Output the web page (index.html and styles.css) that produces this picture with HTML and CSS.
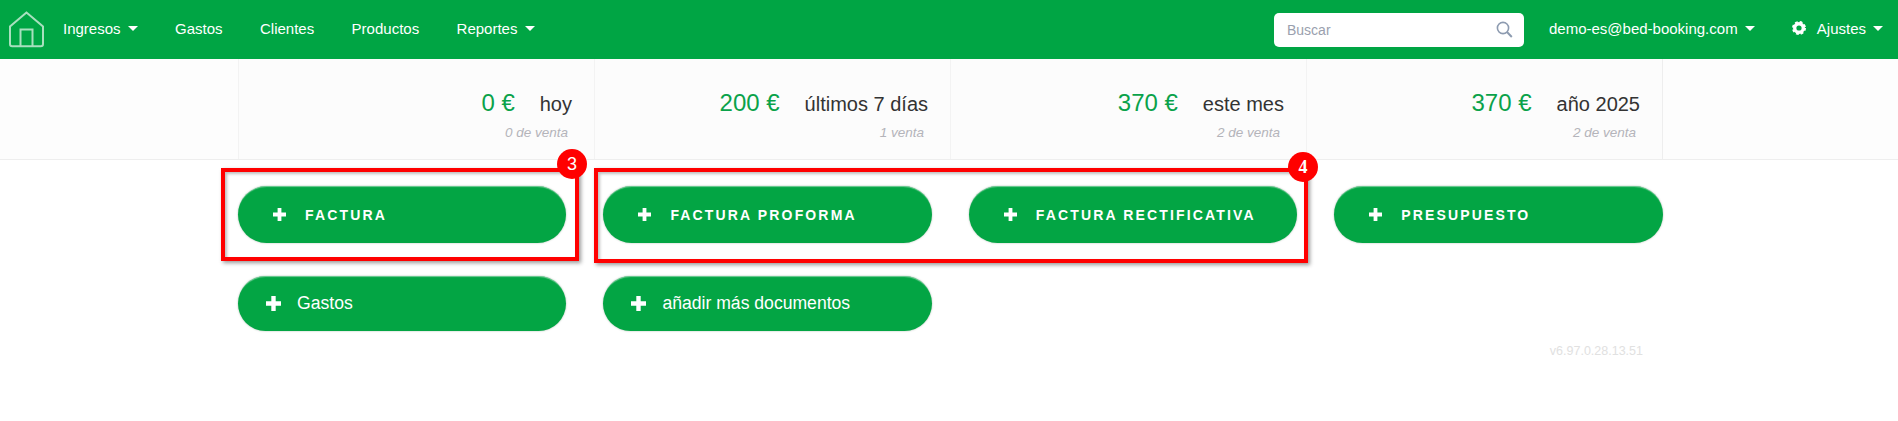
FILE: index.html
```html
<!DOCTYPE html>
<html lang="es">
<head>
    <meta charset="utf-8"/>
    <title>Panel</title>
    <link rel="stylesheet" href="styles.css">
</head>
<body>
<div class="navbar">
    <a class="nav_home">
        <svg width="37" height="37" viewBox="0 0 37 37" fill="none" stroke="#a8e0be" stroke-width="2">
            <path d="M18.5 1.5 L2 15.5 V33 Q2 35.2 4.2 35.2 H32.8 Q35 35.2 35 33 V15.5 Z"/>
            <path d="M12.5 35 V18.5 H24.5 V35"/>
        </svg>
    </a>
    <div class="nav_links">
        <a class="nav_link">Ingresos <span class="caret"></span></a>
        <a class="nav_link">Gastos</a>
        <a class="nav_link">Clientes</a>
        <a class="nav_link">Productos</a>
        <a class="nav_link">Reportes <span class="caret"></span></a>
    </div>
    <div class="nav_search">
        <span class="search_text">Buscar</span>
        <svg width="17" height="17" viewBox="0 0 17 17" fill="none" stroke="#8d9bb0" stroke-width="1.6">
            <circle cx="7" cy="7" r="5.6"/>
            <path d="M11 11 L15.8 16" stroke-width="2"/>
        </svg>
    </div>
    <a class="nav_link nav_user">demo-es@bed-booking.com <span class="caret"></span></a>
    <a class="nav_link nav_settings">
        <svg class="gear" width="14" height="14" viewBox="0 0 15 15">
            <circle cx="7.5" cy="7.5" r="4.6" fill="none" stroke="#fff" stroke-width="3.6"/>
            <circle cx="7.5" cy="7.5" r="6.4" fill="none" stroke="#fff" stroke-width="2.2" stroke-dasharray="2.9 2.13"/>
        </svg>
        Ajustes <span class="caret"></span>
    </a>
</div>

<div class="stats_band">
    <div class="stats">
        <div class="stat">
            <div class="stat_top"><span class="stat_value">0 €</span><span class="stat_label">hoy</span></div>
            <div class="stat_sub">0 de venta</div>
        </div>
        <div class="stat">
            <div class="stat_top"><span class="stat_value">200 €</span><span class="stat_label">últimos 7 días</span></div>
            <div class="stat_sub">1 venta</div>
        </div>
        <div class="stat">
            <div class="stat_top"><span class="stat_value">370 €</span><span class="stat_label">este mes</span></div>
            <div class="stat_sub">2 de venta</div>
        </div>
        <div class="stat">
            <div class="stat_top"><span class="stat_value">370 €</span><span class="stat_label">año 2025</span></div>
            <div class="stat_sub">2 de venta</div>
        </div>
    </div>
</div>

<div class="content">
    <div class="mark mark_one"><span class="mark_num">3</span></div>
    <div class="mark mark_two"><span class="mark_num">4</span></div>

    <div class="btn_grid">
        <a class="btn btn_doc"><svg class="plus" viewBox="0 0 13 13"><path d="M4.6 0H8.4V4.6H13V8.4H8.4V13H4.6V8.4H0V4.6H4.6Z"/></svg>FACTURA</a>
        <a class="btn btn_doc"><svg class="plus" viewBox="0 0 13 13"><path d="M4.6 0H8.4V4.6H13V8.4H8.4V13H4.6V8.4H0V4.6H4.6Z"/></svg>FACTURA PROFORMA</a>
        <a class="btn btn_doc"><svg class="plus" viewBox="0 0 13 13"><path d="M4.6 0H8.4V4.6H13V8.4H8.4V13H4.6V8.4H0V4.6H4.6Z"/></svg>FACTURA RECTIFICATIVA</a>
        <a class="btn btn_doc"><svg class="plus" viewBox="0 0 13 13"><path d="M4.6 0H8.4V4.6H13V8.4H8.4V13H4.6V8.4H0V4.6H4.6Z"/></svg>PRESUPUESTO</a>
        <a class="btn btn_small"><svg class="plus" viewBox="0 0 13 13"><path d="M4.6 0H8.4V4.6H13V8.4H8.4V13H4.6V8.4H0V4.6H4.6Z"/></svg>Gastos</a>
        <a class="btn btn_small"><svg class="plus" viewBox="0 0 13 13"><path d="M4.6 0H8.4V4.6H13V8.4H8.4V13H4.6V8.4H0V4.6H4.6Z"/></svg>añadir más documentos</a>
    </div>
    <div class="version">v6.97.0.28.13.51</div>
</div>
</body>
</html>
```

FILE: styles.css
```css
*{margin:0;padding:0;box-sizing:border-box;}
html,body{height:100%;overflow:hidden;}
body{
    background:#fff;
    font-family:"Liberation Sans",Arial,sans-serif;
    color:#333;
}

.navbar{
    display:flex;
    align-items:center;
    height:59px;
    background:#00a544;
    padding:0 15px 0 8px;
}
.nav_home{
    display:flex;
    width:55px;
}
.nav_links{
    display:flex;
    gap:37.4px;
    flex:1;
    padding-bottom:3px;
}
.nav_link{
    color:#fff;
    font-size:15px;
    white-space:nowrap;
}
.caret{
    display:inline-block;
    width:0;
    height:0;
    margin-left:3px;
    vertical-align:3px;
    border-left:5px solid transparent;
    border-right:5px solid transparent;
    border-top:5px solid #fff;
}
.nav_search{
    display:flex;
    align-items:center;
    justify-content:space-between;
    width:250px;
    height:34px;
    padding:0 11px 0 13px;
    background:#fff;
    border-radius:5px;
}
.search_text{
    color:#9a9fae;
    font-size:14px;
}
.nav_user{
    margin:0 0 3px 25px;
}
.nav_settings{
    display:flex;
    align-items:center;
    margin:0 0 3px 37px;
}
.gear{
    margin-right:11px;
}
.nav_settings .caret{
    margin-left:7px;
    vertical-align:0;
}

.stats_band{
    height:101px;
    background:#fdfdfd;
    border-bottom:1px solid #eeeeee;
}
.stats{
    display:grid;
    grid-template-columns:repeat(4,356px);
    width:1425px;
    height:100px;
    margin-left:238px;
}
.stat{
    height:100px;
    padding:28px 22px 0 0;
    background:#fcfcfc;
    border-left:1px solid #f3f3f3;
    text-align:right;
}
.stat:last-child{
    border-right:1px solid #eeeeee;
    width:357px;
}
.stat_top{
    height:31px;
    line-height:31px;
    white-space:nowrap;
}
.stat_value{
    color:#0aa24a;
    font-size:24px;
    margin-right:25px;
}
.stat_label{
    color:#333;
    font-size:20px;
}
.stat_sub{
    margin-top:7px;
    padding-right:4px;
    color:#b4b4ba;
    font-size:13.5px;
    font-style:italic;
}

.content{
    position:relative;
    padding:26px 0 0 238px;
}
.btn_grid{
    display:grid;
    grid-template-columns:repeat(4,328.4px);
    column-gap:37px;
    row-gap:33px;
}
.btn{
    display:flex;
    align-items:center;
    background:#03a544;
    border-radius:30px;
    color:#fff;
    box-shadow:inset 0 2px 1px -1px rgba(255,255,255,.45),0 0 2px rgba(0,60,20,.35);
}
.btn_doc{
    height:57px;
    padding-left:35px;
    font-size:14px;
    font-weight:bold;
    letter-spacing:2.15px;
}
.btn_doc .plus{
    width:13px;
    height:13px;
    margin-right:19px;
}
.btn_small{
    height:55px;
    padding-left:28px;
    font-size:17.6px;
}
.btn_small .plus{
    width:15px;
    height:15px;
    margin-right:16px;
}
.plus{
    fill:#fff;
    flex:none;
}

/* red boxes drawn over the buttons */
.mark{
    position:absolute;
    border:4px solid #ff0000;
    box-shadow:2px 2px 4px rgba(0,0,0,.4),inset 2px 2px 3px rgba(0,0,0,.25);
    pointer-events:none;
}
.mark_one{
    left:221px;
    top:8px;
    width:358px;
    height:93px;
}
.mark_two{
    left:594px;
    top:8px;
    width:714px;
    height:95px;
}
.mark_num{
    position:absolute;
    width:30px;
    height:30px;
    line-height:30px;
    border-radius:50%;
    background:#ff0000;
    color:#fff;
    font-size:18px;
    text-align:center;
}
.mark_one .mark_num{
    right:-12px;
    top:-23px;
}
.mark_two .mark_num{
    right:-14px;
    top:-20px;
    font-family:"Liberation Serif",serif;
    font-weight:bold;
}

.version{
    width:1405px;
    margin-top:13px;
    color:#e1e1e1;
    font-size:12.5px;
    text-align:right;
}
```
